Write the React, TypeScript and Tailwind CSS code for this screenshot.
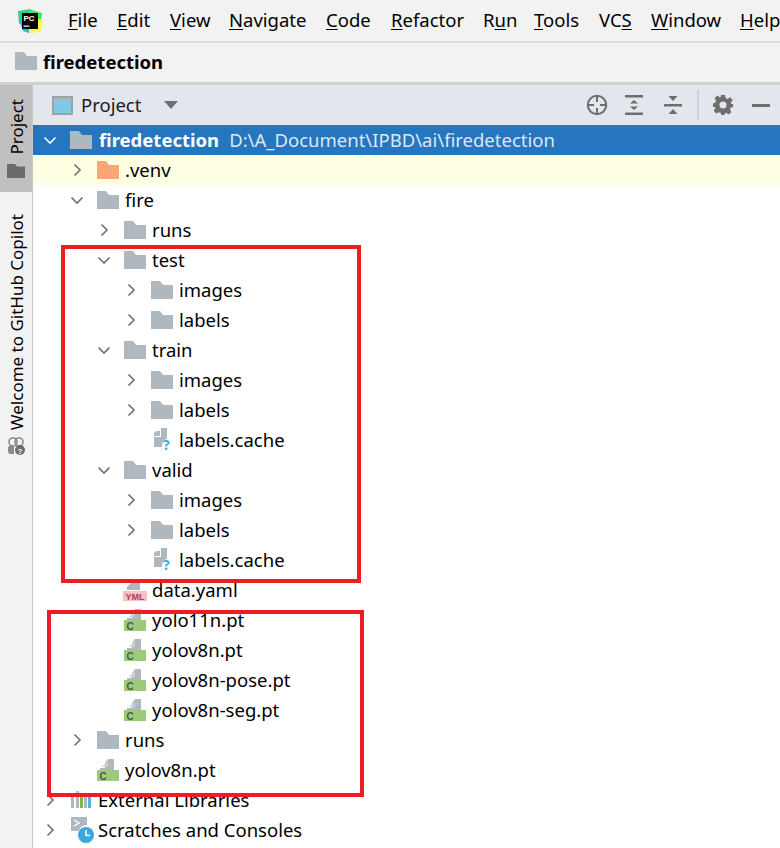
import { ReactNode } from "react";

const FONT = "font-['Noto_Sans','Open_Sans',sans-serif]";

// index of the underlined mnemonic letter per menu
const MENUS: { label: string; u: number; w: string }[] = [
  { label: "File", u: 0, w: "w-[49px]" },
  { label: "Edit", u: 0, w: "w-[53px]" },
  { label: "View", u: 0, w: "w-[59px]" },
  { label: "Navigate", u: 0, w: "w-[97px]" },
  { label: "Code", u: 0, w: "w-[65px]" },
  { label: "Refactor", u: 0, w: "w-[92px]" },
  { label: "Run", u: 1, w: "w-[51px]" },
  { label: "Tools", u: 0, w: "w-[65px]" },
  { label: "VCS", u: 2, w: "w-[52px]" },
  { label: "Window", u: 0, w: "w-[89px]" },
  { label: "Help", u: 0, w: "w-[50px]" },
];

type Kind = "folder" | "venv" | "unknown" | "yaml" | "pt" | "libs" | "scratch";

const TREE: { level: number; open?: boolean; kind: Kind; name: string }[] = [
  { level: 1, open: false, kind: "venv", name: ".venv" },
  { level: 1, open: true, kind: "folder", name: "fire" },
  { level: 2, open: false, kind: "folder", name: "runs" },
  { level: 2, open: true, kind: "folder", name: "test" },
  { level: 3, open: false, kind: "folder", name: "images" },
  { level: 3, open: false, kind: "folder", name: "labels" },
  { level: 2, open: true, kind: "folder", name: "train" },
  { level: 3, open: false, kind: "folder", name: "images" },
  { level: 3, open: false, kind: "folder", name: "labels" },
  { level: 3, kind: "unknown", name: "labels.cache" },
  { level: 2, open: true, kind: "folder", name: "valid" },
  { level: 3, open: false, kind: "folder", name: "images" },
  { level: 3, open: false, kind: "folder", name: "labels" },
  { level: 3, kind: "unknown", name: "labels.cache" },
  { level: 2, kind: "yaml", name: "data.yaml" },
  { level: 2, kind: "pt", name: "yolo11n.pt" },
  { level: 2, kind: "pt", name: "yolov8n.pt" },
  { level: 2, kind: "pt", name: "yolov8n-pose.pt" },
  { level: 2, kind: "pt", name: "yolov8n-seg.pt" },
  { level: 1, open: false, kind: "folder", name: "runs" },
  { level: 1, kind: "pt", name: "yolov8n.pt" },
  { level: 0, open: false, kind: "libs", name: "External Libraries" },
  { level: 0, open: false, kind: "scratch", name: "Scratches and Consoles" },
];

function Folder({ color = "#AFB8BF" }: { color?: string }) {
  return (
    <svg width="22" height="18" viewBox="0 0 22 18" className="shrink-0">
      <path d="M0 0H9L12 4H22V18H0Z" fill={color} />
    </svg>
  );
}

function Page() {
  return (
    <>
      <path d="M9 0H13V8H5V4Z" fill="#AFB8BF" />
    </>
  );
}

function FileIcon({ kind }: { kind: Kind }) {
  if (kind === "unknown") {
    return (
      <svg width="22" height="24" viewBox="0 0 22 24" className="shrink-0 -mt-[2px]">
        <path d="M5 4H9V9H3V6Z" fill="#AFB8BF" />
        <path d="M10 1H16V12C13 12 11 15 11 20H3V10H10Z" fill="#AFB8BF" />
        <text x="12" y="23" fontSize="14" fontWeight="700" fill="#3FA9DF" fontFamily="Noto Sans">?</text>
      </svg>
    );
  }
  if (kind === "yaml") {
    return (
      <svg width="24" height="22" viewBox="0 0 24 22" className="shrink-0 -ml-[1px] mr-[-1px]">
        <path d="M12 0H17V11H4V8Z" fill="#AFB8BF" />
        <rect x="0" y="12" width="24" height="10" fill="#F9C0C8" />
        <text x="12" y="20.5" textAnchor="middle" fontSize="9" fontWeight="700" fill="#A8404F" fontFamily="Liberation Sans">YML</text>
      </svg>
    );
  }
  return (
    <svg width="22" height="22" viewBox="0 0 22 22" className="shrink-0">
      <path d="M11 0H17V11H3V9H8V4Z" fill="#AFB8BF" />
      <path d="M9 4L11 2V8H5Z" fill="#C9D0D5" />
      <rect x="0" y="11" width="22" height="11" fill="#9BCB7A" />
      <text x="6" y="20.5" textAnchor="middle" fontSize="10" fontWeight="700" fill="#4A5A4A" fontFamily="Liberation Sans">C</text>
    </svg>
  );
}

function Libs() {
  return (
    <svg width="22" height="20" viewBox="0 0 22 20" className="shrink-0">
      <rect x="1" y="3" width="3" height="15" fill="#AFB8BF" />
      <rect x="6" y="1" width="3" height="17" fill="#AFB8BF" />
      <rect x="10" y="3" width="3" height="15" fill="#7DB84F" />
      <rect x="14" y="3" width="3" height="15" fill="#AFB8BF" />
      <rect x="18" y="3" width="3" height="15" fill="#55B4E6" />
    </svg>
  );
}

function Scratch() {
  return (
    <svg width="26" height="26" viewBox="0 0 26 26" className="shrink-0 -mr-[4px]">
      <path d="M1 0H17V8C13 8 10 10 9 14H1Z" fill="#AFB8BF" />
      <path d="M4 3L9 6L4 9" fill="none" stroke="#fff" strokeWidth="1.4" />
      <circle cx="16" cy="18" r="8" fill="#3AA8DC" />
      <path d="M16 13V18.5H20" fill="none" stroke="#fff" strokeWidth="1.5" />
    </svg>
  );
}

function Chevron({ open, white }: { open: boolean; white?: boolean }) {
  return (
    <svg width="16" height="16" viewBox="0 0 16 16" className="shrink-0">
      <path
        d={open ? "M2.5 5.5L8 11L13.5 5.5" : "M5.5 2.5L11 8L5.5 13.5"}
        fill="none"
        stroke={white ? "#fff" : "#6E6E6E"}
        strokeWidth="1.6"
      />
    </svg>
  );
}

function Row({ level, open, icon, children, className = "" }: { level: number; open?: boolean; icon: ReactNode; children: ReactNode; className?: string }) {
  return (
    <div className={`flex h-[30px] items-center ${className}`} style={{ paddingLeft: 9 + 27 * level }}>
      <div className="mr-[12px] w-[16px] shrink-0">{open !== undefined && <Chevron open={open} />}</div>
      <div className="mr-[6px] flex w-[22px] shrink-0 items-center">{icon}</div>
      {children}
    </div>
  );
}

function iconFor(kind: Kind) {
  if (kind === "folder") return <Folder />;
  if (kind === "venv") return <Folder color="#F9A875" />;
  if (kind === "libs") return <Libs />;
  if (kind === "scratch") return <Scratch />;
  return <FileIcon kind={kind} />;
}

function PyCharmLogo() {
  return (
    <svg width="26" height="26" viewBox="0 0 26 26">
      <path d="M1 3L14 1L8 14L2 16Z" fill="#21D789" />
      <path d="M12 1L25 5L24 14L14 12Z" fill="#3BEA62" />
      <path d="M16 10L26 12L23 24L12 25Z" fill="#FCF84A" />
      <path d="M2 12L12 14L12 25L6 23Z" fill="#07C3F2" />
      <rect x="5" y="5" width="16" height="16" fill="#000" />
      <text x="6.5" y="12.5" fontSize="8" fontWeight="700" fill="#fff" fontFamily="Liberation Sans">PC</text>
      <rect x="6.5" y="17.5" width="6" height="1.2" fill="#fff" />
    </svg>
  );
}

function ToolIcons() {
  const c = "#6E6E6E";
  return (
    <div className="ml-auto flex items-center">
      <svg width="22" height="22" viewBox="0 0 22 22" className="mr-[17px]">
        <circle cx="11" cy="11" r="9.2" fill="none" stroke={c} strokeWidth="2" />
        <path d="M11 2V8M11 14V20M2 11H8M14 11H20" stroke={c} strokeWidth="2" />
      </svg>
      <svg width="18" height="22" viewBox="0 0 18 22" className="mr-[21px]">
        <path d="M0 1H18V3.5H0ZM0 18.5H18V21H0Z" fill={c} />
        <path d="M9 6L13 9.5H5ZM9 16L5 12.5H13Z" fill={c} />
      </svg>
      <svg width="18" height="20" viewBox="0 0 18 20" className="mr-[15px]">
        <path d="M0 9H18V11.5H0Z" fill={c} />
        <path d="M4.5 1H13.5L9 6ZM4.5 19H13.5L9 14Z" fill={c} />
      </svg>
      <div className="mr-[14px] h-[30px] w-[2px] bg-[#cfd1d5]" />
      <svg width="20" height="20" viewBox="0 0 20 20" className="mr-[19px]">
        <path
          d="M8 0H12L12.6 3L14.6 3.9L17.2 2.2L19.8 5.2L17.8 7.4L18.3 9H20V12L17.8 12.6L17 14.6L18.4 17.2L15.4 19.6L13.2 17.8L12 18.3L11.6 20H8.4L7.6 17.8L5.8 17.2L3 18.6L0.6 15.6L2.4 13.4L1.8 12H0V8.4L2.4 7.6L3 5.8L1.6 3L4.6 0.6L6.8 2.4L7.8 2Z"
          fill={c}
        />
        <circle cx="10" cy="10" r="3.5" fill="#E3E6ED" />
      </svg>
      <div className="mr-[1px] h-[3px] w-[18px] bg-[#6E6E6E]" />
    </div>
  );
}

export default function App() {
  return (
    <div className={`relative h-[848px] w-[780px] overflow-hidden bg-white text-[18.5px] leading-none text-black ${FONT}`}>
      {/* menu bar */}
      <div className="flex h-[43px] items-center border-b-2 border-[#dcdcdc] bg-[#f2f2f2]">
        <div className="ml-[17px] mr-[25px] w-[26px] shrink-0">
          <PyCharmLogo />
        </div>
        {MENUS.map((m) => (
          <span key={m.label} className={`${m.w} shrink-0 whitespace-nowrap`}>
            {m.label.slice(0, m.u)}
            <span className="underline underline-offset-2">{m.label[m.u]}</span>
            {m.label.slice(m.u + 1)}
          </span>
        ))}
      </div>

      {/* breadcrumb */}
      <div className="flex h-[42px] items-center border-b-[3px] border-[#d0d0d0] bg-[#f2f2f2] pl-[15px]">
        <div className="mr-[6px] -mt-[3px]">
          <Folder />
        </div>
        <span className="font-bold">firedetection</span>
      </div>

      <div className="flex h-[763px]">
        {/* left tool strip */}
        <div className="flex w-[33px] shrink-0 flex-col border-r border-[#c9c9c9] bg-[#f2f2f2]">
          <div className="flex h-[107px] flex-col items-center justify-center gap-[10px] bg-[#c0c0c0]">
            <span className="rotate-180 text-[17px] [writing-mode:vertical-rl]">Project</span>
            <svg width="18" height="14" viewBox="0 0 18 14">
              <path d="M0 0H8L10 2.5H18V14H0Z" fill="#6B6B6B" />
            </svg>
          </div>
          <div className="mt-[22px] flex flex-col items-center gap-[6px]">
            <span className="rotate-180 text-[17px] whitespace-nowrap [writing-mode:vertical-rl]">Welcome to GitHub Copilot</span>
            <svg width="20" height="20" viewBox="0 0 20 20">
              <circle cx="7" cy="6" r="4" fill="none" stroke="#8a8a8a" strokeWidth="1.6" />
              <circle cx="13" cy="6" r="4" fill="none" stroke="#8a8a8a" strokeWidth="1.6" />
              <path d="M2 12C2 9 5 9 8 10V18H4C2 18 2 15 2 12Z" fill="#8a8a8a" />
              <circle cx="14" cy="14" r="5" fill="#6e6e6e" />
              <text x="14" y="17.5" textAnchor="middle" fontSize="8" fontWeight="700" fill="#fff" fontFamily="Liberation Sans">?</text>
            </svg>
          </div>
        </div>

        {/* project panel */}
        <div className="min-w-0 flex-1">
          <div className="flex h-[40px] items-center bg-[#e3e6ed] pl-[19px] pr-[9px]">
            <svg width="21" height="19" viewBox="0 0 21 19" className="mr-[8px]">
              <rect x="1" y="1" width="19" height="17" fill="#7FC8EA" stroke="#9AA3AA" strokeWidth="2" />
              <rect x="2" y="2" width="17" height="3" fill="#AFB8BF" />
            </svg>
            <span className="text-[#1c1c1c]">Project</span>
            <svg width="14" height="8" viewBox="0 0 14 8" className="ml-[23px]">
              <path d="M0 0H14L7 8Z" fill="#6E6E6E" />
            </svg>
            <ToolIcons />
          </div>

          <div className="flex h-[30px] items-center bg-[#2675bf] pl-[9px] text-white">
            <div className="mr-[12px] w-[16px] shrink-0">
              <Chevron open white />
            </div>
            <div className="mr-[7px]">
              <Folder />
            </div>
            <span className="mr-[10px] font-bold">firedetection</span>
            <span className="text-[#dce8f5]">D:\A_Document\IPBD\ai\firedetection</span>
          </div>

          {TREE.map((n, i) => (
            <Row key={i} level={n.level} open={n.open} icon={iconFor(n.kind)} className={i === 0 ? "bg-[#ffffe4]" : ""}>
              <span className="whitespace-nowrap">{n.name}</span>
            </Row>
          ))}
        </div>
      </div>

      {/* red annotation boxes */}
      <div className="absolute left-[61px] top-[245px] h-[338px] w-[300px] border-[4px] border-[#ee1c25]" />
      <div className="absolute left-[47px] top-[610px] h-[187px] w-[317px] border-[4px] border-[#ee1c25]" />
    </div>
  );
}
